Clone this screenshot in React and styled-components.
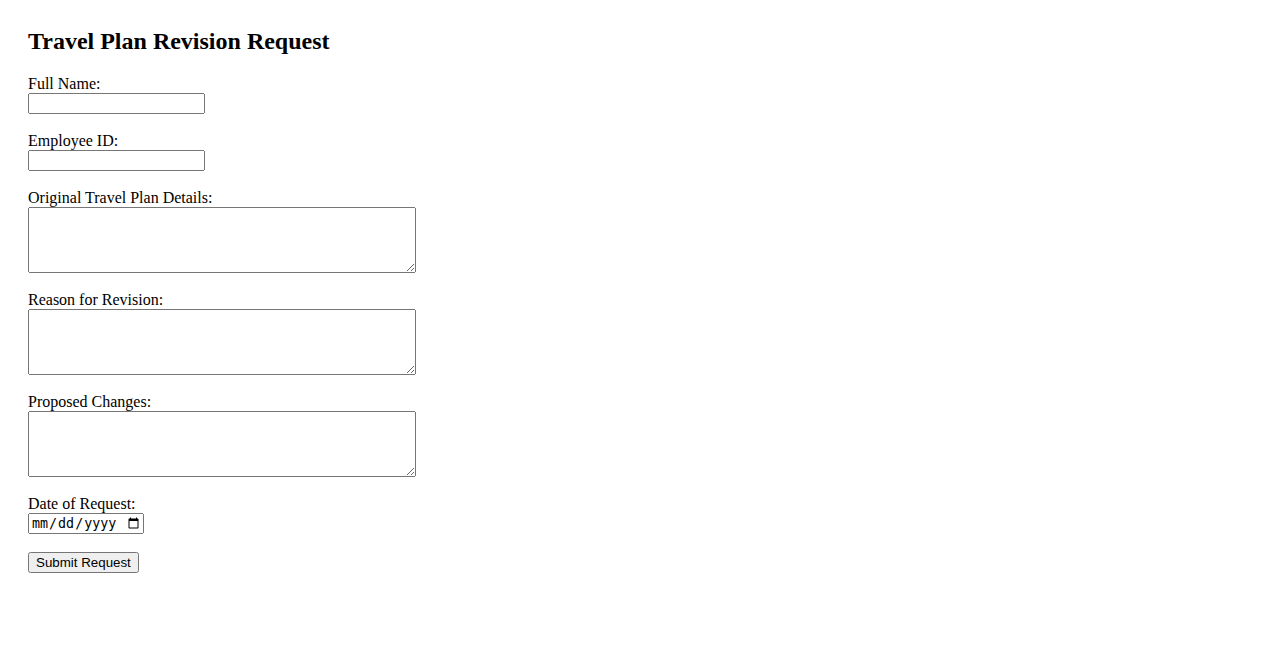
import styled, { createGlobalStyle } from 'styled-components'

const GlobalStyle = createGlobalStyle`
    body {
        margin: 0;
        background: #ffffff;
        color: #000000;
        font-family: "Liberation Serif", "Times New Roman", serif;
        font-size: 16px;
    }
`

const Page = styled.div`
    padding: 28px 28px 40px 28px;
`

const Title = styled.h2`
    margin: 0 0 21px 0;
    font-size: 24px;
    font-weight: bold;
    line-height: 26px;
`

const Form = styled.form`
    display: flex;
    flex-direction: column;
    align-items: flex-start;
    gap: 17.6px;
`

const Field = styled.div`
    display: flex;
    flex-direction: column;
    align-items: flex-start;
`

const Label = styled.label`
    display: block;
    line-height: 18.4px;
`

const TextInput = styled.input`
    box-sizing: border-box;
    width: ${p => p.$width || 177}px;
    height: 21px;
    margin: 0;
`

const TextArea = styled.textarea`
    box-sizing: border-box;
    width: 388px;
    height: 66px;
    margin: 0;
`

const Button = styled.button`
    box-sizing: border-box;
    height: 21px;
    margin: 0;
    padding: 1px 6px;
    font-family: "Liberation Sans", Arial, sans-serif;
    font-size: 13.333px;
`

const textFields = [
    { id: 'fullName', label: 'Full Name:' },
    { id: 'employeeId', label: 'Employee ID:' },
]

const areaFields = [
    { id: 'original', label: 'Original Travel Plan Details:' },
    { id: 'reason', label: 'Reason for Revision:' },
    { id: 'changes', label: 'Proposed Changes:' },
]

export default function App() {
    return (
        <>
            <GlobalStyle />
            <Page>
                <Title>Travel Plan Revision Request</Title>
                <Form onSubmit={e => e.preventDefault()}>
                    {textFields.map(f => (
                        <Field key={f.id}>
                            <Label htmlFor={f.id}>{f.label}</Label>
                            <TextInput id={f.id} type="text" />
                        </Field>
                    ))}
                    {areaFields.map(f => (
                        <Field key={f.id}>
                            <Label htmlFor={f.id}>{f.label}</Label>
                            <TextArea id={f.id} />
                        </Field>
                    ))}
                    <Field>
                        <Label htmlFor="requestDate">Date of Request:</Label>
                        <TextInput id="requestDate" type="date" $width={116} />
                    </Field>
                    <Button type="submit">Submit Request</Button>
                </Form>
            </Page>
        </>
    )
}
